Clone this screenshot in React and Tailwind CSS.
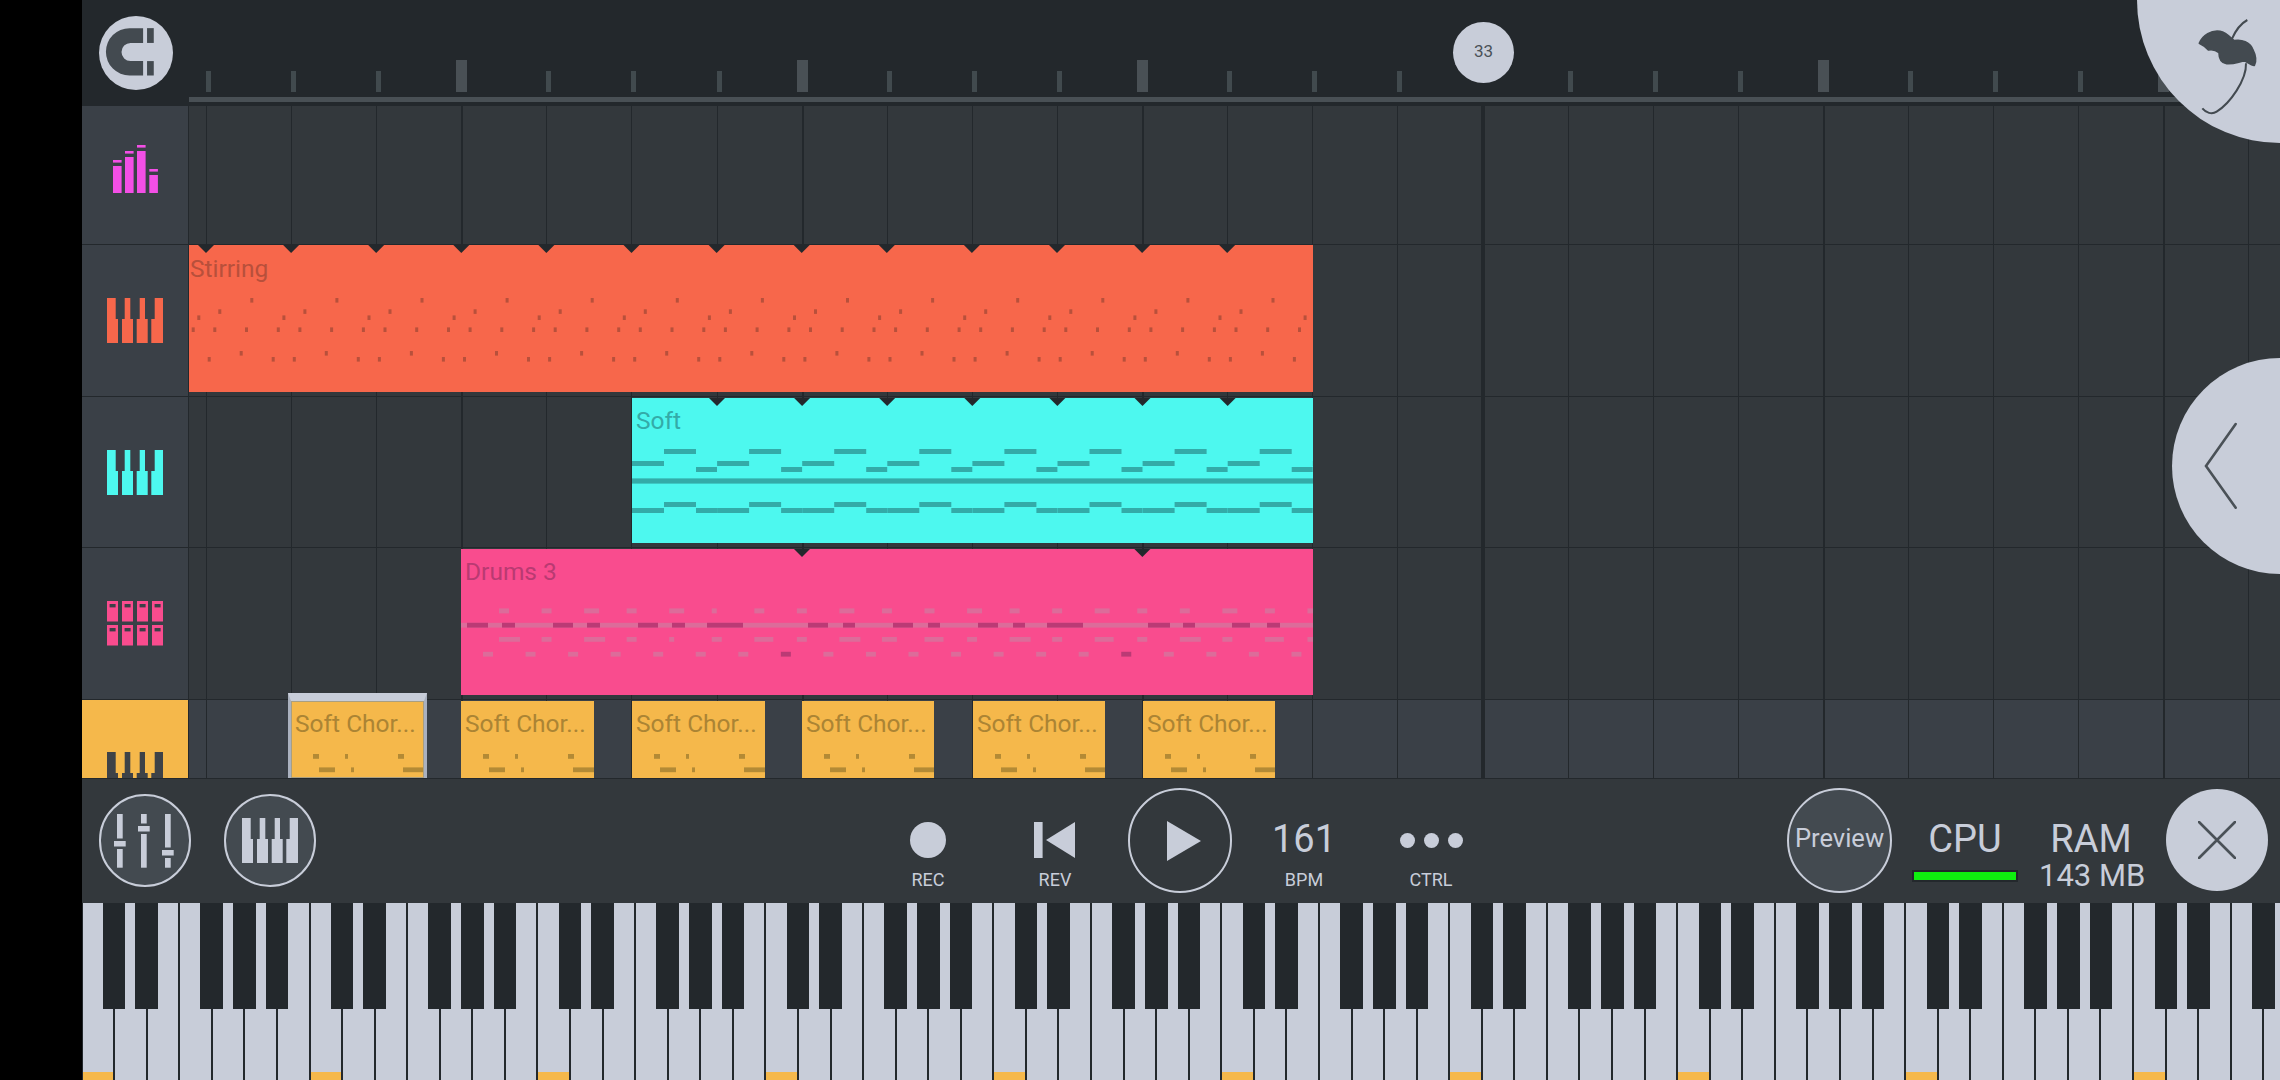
const ICON_KEYS = "M0 0H8.7V21H11V45H0Z M17.7 0H23.3V21H26V45H15V21H17.7Z M32.7 0H38V21H40.7V45H29.7V21H32.7Z M47.7 0H56V45H44.3V21H47.7Z"

function KeysIcon({ className }) {
  return (
    <svg viewBox="0 0 56 45" className={className} fill="currentColor">
      <path d={ICON_KEYS} />
    </svg>
  )
}

function EqIcon() {
  const bars = [
    [0, 21, 15],
    [12, 12, 6],
    [24, 6, 0],
    [36.3, 30, 24],
  ]
  return (
    <svg viewBox="0 0 45 48" className="w-[45px] h-[48px]" fill="#f34fe6">
      {bars.map(([x, top, cap]) => (
        <g key={x}>
          <rect x={x} y={top} width="8.6" height={48 - top} />
          <rect x={x} y={cap} width="8.6" height="2.6" />
        </g>
      ))}
    </svg>
  )
}

function DrumIcon() {
  const xs = [0, 15, 30, 45]
  const ys = [0, 24]
  return (
    <svg viewBox="0 0 56 45" className="w-[56px] h-[45px]">
      {ys.map((y) =>
        xs.map((x) => (
          <g key={`${x}-${y}`}>
            <rect x={x} y={y} width="11" height="20.5" fill="#f94c8e" />
            <rect x={x + 2.6} y={y + 3} width="6" height="3.4" fill="#3a4047" />
          </g>
        ))
      )}
    </svg>
  )
}

function MixerIcon() {
  const sliders = [
    [117, 840],
    [141, 825],
    [165, 849],
  ]
  return (
    <svg viewBox="110 810 70 60" className="w-[70px] h-[60px]" fill="#c8cdd9">
      {sliders.map(([x, knob]) => (
        <g key={x}>
          <rect x={x} y="813" width="5.7" height={knob - 2.5 - 813} />
          <rect x={x - 3} y={knob} width="11.7" height="5.5" />
          <rect x={x} y={knob + 8} width="5.7" height={866.7 - knob - 8} />
        </g>
      ))}
    </svg>
  )
}

function Magnet() {
  return (
    <svg viewBox="98 16 75 75" className="w-[74px] h-[74px]" fill="#434a50">
      <path d="M142.7 28.3H129A24 24 0 0 0 129 76.3H142.7V61.7H130A9.2 9.2 0 0 1 130 43.3H142.7Z" />
      <rect x="146.7" y="28.3" width="6.8" height="15" />
      <rect x="146.7" y="61.7" width="6.8" height="14.6" />
    </svg>
  )
}

function Stirring() {
  const base = [
    [250.3, 298],
    [218.3, 309.3],
    [197.3, 315.4],
    [191.7, 327.4],
    [213.3, 327.4],
    [245, 327.4],
    [239.7, 351],
    [207.7, 357],
    [271.7, 357],
  ]
  const notes = []
  for (let p = 0; p < 14; p++) {
    base.forEach(([x, y]) => notes.push([x + p * 85.1, y]))
  }
  return (
    <svg viewBox="189 245 1124 147" className="absolute inset-0 w-full h-full" fill="#b8503b">
      {notes.map(([x, y]) => (
        <rect key={`${x}-${y}`} x={x} y={y} width="3" height="4.6" />
      ))}
    </svg>
  )
}

function SoftNotes() {
  const base = [
    [664, 449, 32],
    [632, 461, 32],
    [696, 467, 21],
    [664, 502, 32],
    [632, 508, 32],
    [696, 508, 21],
  ]
  const notes = []
  for (let p = 0; p < 9; p++) {
    base.forEach(([x, y, w]) => notes.push([x + p * 85.1, y, w]))
  }
  return (
    <svg viewBox="632 398 681 145" className="absolute inset-0 w-full h-full" fill="#33aba8">
      {notes.map(([x, y, w]) => (
        <rect key={`${x}-${y}`} x={x} y={y} width={w} height="5" />
      ))}
      <rect x="632" y="478.4" width="681" height="5.2" />
    </svg>
  )
}

function DrumNotes() {
  const row1 = [10, 10, 15, 10, 15, 5, 10, 10, 15, 10, 10, 15, 10, 10, 15, 10, 10, 15, 10, 10]
  const row3 = [21, 10, 21, 10, 5, 10, 19, 10, 21, 15, 19, 10, 21, 10, 19, 10, 21, 10, 19, 10]
  const dark = [
    [467, 488], [502, 515], [553, 573], [587, 600], [638, 658], [672, 685],
    [707, 743], [808, 828], [843, 855], [893, 913], [928, 940], [978, 998],
    [1013, 1025], [1047, 1083], [1148, 1170], [1183, 1195], [1232, 1250], [1267, 1280],
  ]
  return (
    <svg viewBox="461 549 852 146" className="absolute inset-0 w-full h-full">
      {row1.map((w, i) => (
        <rect key={i} x={499 + i * 42.55} y="608.4" width={w} height="5" fill="#dc6c9a" />
      ))}
      <rect x="461" y="622.8" width="852" height="4.8" fill="#dc6c9a" />
      {dark.map(([a, b]) => (
        <rect key={a} x={a} y="622.8" width={b - a} height="4.8" fill="#bb3a75" />
      ))}
      {row3.map((w, i) => (
        <rect key={i} x={499 + i * 42.55} y="637" width={w} height="4.8" fill="#dc6c9a" />
      ))}
      {Array.from({ length: 20 }, (_, i) => (
        <rect
          key={i}
          x={483 + i * 42.55}
          y="651.8"
          width="10"
          height="4.8"
          fill={i === 7 || i === 15 ? "#bb3a75" : "#dc6c9a"}
        />
      ))}
    </svg>
  )
}

function ChordNotes() {
  const notes = [
    [22, 53, 6],
    [54, 53, 3],
    [107, 53, 6],
    [28, 66.4, 16],
    [60, 66.4, 3],
    [112, 66.4, 21],
  ]
  return (
    <svg viewBox="0 0 133 77" className="absolute left-0 top-0 w-[133px] h-[77px]" fill="#b38a35">
      {notes.map(([x, y, w]) => (
        <rect key={x} x={x} y={y} width={w} height="4.8" />
      ))}
    </svg>
  )
}

// little dark notches that sit on the top edge of a clip
function Notches({ from, count, left, step = 85.1 }) {
  return (
    <svg viewBox="0 0 1130 8" className="absolute top-0 left-0 w-[1130px] h-2 overflow-visible" fill="#23282c">
      {Array.from({ length: count }, (_, i) => {
        const x = from + i * step - left
        return <polygon key={i} points={`${x - 8},0 ${x + 8},0 ${x},8`} />
      })}
    </svg>
  )
}

function GridColumns() {
  const cols = Array.from({ length: 25 }, (_, i) => i)
  return (
    <div className="absolute inset-0 flex overflow-hidden">
      <div className="w-[17px] shrink-0" />
      {cols.map((i) => (
        <div
          key={i}
          className={
            i === 15
              ? "w-[85.1px] shrink-0 -ml-[1.5px] mr-[1.5px] border-l-4 border-[#23282c]"
              : i % 4 === 3
                ? "w-[85.1px] shrink-0 border-l-2 border-[#23282c]"
                : "w-[85.1px] shrink-0 border-l border-[#23282c]"
          }
        />
      ))}
    </div>
  )
}

function Track({ height, bg = "bg-[#33383c]", side = "bg-[#3a4047]", sideClass = "items-center justify-center", icon, children }) {
  return (
    <div className={`flex shrink-0 border-b border-[#23282c] ${height}`}>
      <div className={`w-[107px] shrink-0 flex overflow-hidden border-r border-[#23282c] ${side} ${sideClass}`}>{icon}</div>
      <div className={`relative flex-1 ${bg}`}>
        <GridColumns />
        {children}
      </div>
    </div>
  )
}

function ChordClip({ left, width = "w-[133px]", selected }) {
  return (
    <div className={`absolute top-[1px] bottom-0 overflow-hidden bg-[#f5b84b] ${left} ${width}`}>
      <ChordNotes />
      {selected && <div className="absolute inset-0 border border-[#aa9f80]" />}
      <div className="relative pl-1 pt-[9px] text-[24.5px] leading-7 whitespace-nowrap text-[#ab8434]">
        Soft Chor...
      </div>
    </div>
  )
}

function Ruler() {
  const ticks = Array.from({ length: 25 }, (_, i) => i)
  return (
    <div className="flex-1 flex flex-col min-w-0">
      <div className="h-[92px] flex items-end pl-[17px] overflow-hidden">
        {ticks.map((i) => (
          <div key={i} className="w-[85.1px] shrink-0">
            {i === 15 ? null : i % 4 === 3 ? (
              <div className="w-[11px] h-8 -ml-[5px] bg-[#495055]" />
            ) : (
              <div className="w-[5px] h-[21px] bg-[#414a4e]" />
            )}
          </div>
        ))}
      </div>
      <div className="mt-[5px] h-[5px] bg-[#495055]" />
    </div>
  )
}

function TransportLabel({ children }) {
  return <div className="mt-[11px] text-lg leading-[22px] text-center text-[#c8cdd9]">{children}</div>
}

function Transport() {
  return (
    <div className="h-[124px] shrink-0 flex items-start bg-[#33383c] text-[#c8cdd9]">
      <button className="ml-[17px] mt-[15px] w-[92px] h-[93px] shrink-0 rounded-full border-2 border-[#c8cdd9] bg-[#434a50] flex items-center justify-center">
        <MixerIcon />
      </button>
      <button className="ml-[33px] mt-[15px] w-[92px] h-[93px] shrink-0 rounded-full border-2 border-[#c8cdd9] bg-[#434a50] flex items-center justify-center">
        <KeysIcon className="w-[56px] h-[45px] text-[#c8cdd9]" />
      </button>

      <div className="ml-[562px] mt-[43px] w-[100px] shrink-0">
        <div className="h-9 flex justify-center">
          <div className="w-9 h-9 rounded-full bg-[#c8cdd9]" />
        </div>
        <TransportLabel>REC</TransportLabel>
      </div>
      <div className="ml-[27px] mt-[43px] w-[100px] shrink-0">
        <div className="h-9 flex justify-center">
          <svg viewBox="0 0 42 36" className="w-[42px] h-9" fill="#c8cdd9">
            <rect x="0" y="0" width="8.6" height="36" />
            <polygon points="12,18 41,0 41,36" />
          </svg>
        </div>
        <TransportLabel>REV</TransportLabel>
      </div>
      <button className="ml-[23px] mt-[9px] w-[104px] h-[105px] shrink-0 rounded-full border-2 border-[#c8cdd9] flex items-center justify-center">
        <svg viewBox="0 0 34 40" className="ml-[7px] w-[34px] h-10" fill="#c8cdd9">
          <polygon points="0,0 34,20 0,40" />
        </svg>
      </button>
      <div className="ml-[22px] mt-[43px] w-[100px] shrink-0">
        <div className="h-9 text-[38px] leading-[34px] text-center">161</div>
        <TransportLabel>BPM</TransportLabel>
      </div>
      <div className="ml-[27px] mt-[43px] w-[100px] shrink-0">
        <div className="h-9 flex items-center justify-center gap-[9px]">
          <div className="w-[15px] h-[15px] rounded-full bg-[#c8cdd9]" />
          <div className="w-[15px] h-[15px] rounded-full bg-[#c8cdd9]" />
          <div className="w-[15px] h-[15px] rounded-full bg-[#c8cdd9]" />
        </div>
        <TransportLabel>CTRL</TransportLabel>
      </div>

      <button className="ml-auto mt-[9px] w-[105px] h-[105px] shrink-0 rounded-full border-2 border-[#c8cdd9] bg-[#434a50] text-[25.5px] leading-none text-center text-[#c8cdd9] flex items-center justify-center pb-1">
        Preview
      </button>
      <div className="ml-[20px] mt-[43px] w-[106px] shrink-0">
        <div className="h-9 text-[38px] leading-[34px] text-center">CPU</div>
        <div className="mt-[12px] h-3 border-2 border-[#23282c] bg-[#0fef0f]" />
      </div>
      <div className="ml-[21px] mt-[43px] w-[104px] shrink-0">
        <div className="h-9 text-[38px] leading-[34px] text-center">RAM</div>
        <div className="mt-[2px] text-[31px] leading-[32px] text-center whitespace-nowrap">143 MB</div>
      </div>
      <button className="ml-[23px] mr-[12px] mt-[10px] w-[102px] h-[102px] shrink-0 rounded-full bg-[#c8cdd9] flex items-center justify-center">
        <svg viewBox="0 0 38 38" className="w-[38px] h-[38px]" stroke="#4a5157" strokeWidth="2.6" strokeLinecap="round" fill="none">
          <path d="M1 1L37 37M37 1L1 37" />
        </svg>
      </button>
    </div>
  )
}

function Keyboard() {
  const whites = Array.from({ length: 69 }, (_, i) => i)
  const blackOffsets = [
    [20.4, 22],
    [52.4, 23],
    [117.4, 23],
    [150.4, 23],
    [183.4, 22],
  ]
  const octaves = Array.from({ length: 10 }, (_, i) => i)
  return (
    <div className="relative flex-1 flex pl-[0.6px] overflow-hidden bg-[#23282c]">
      {whites.map((i) => (
        <div key={i} className="w-[32.57px] h-full shrink-0 flex flex-col justify-end border-r-2 border-[#23282c] bg-[#c8cdd9]">
          {i % 7 === 0 && <div className="h-2 bg-[#f5b84b]" />}
        </div>
      ))}
      {octaves.map((o) =>
        blackOffsets.map(([x, w]) => (
          <div
            key={`${o}-${x}`}
            className="absolute top-0 h-[106px] bg-[#23282c]"
            style={{ left: 0.6 + o * 228 + x, width: w }}
          />
        ))
      )}
    </div>
  )
}

export default function App() {
  return (
    <div className="relative flex h-screen w-screen overflow-hidden bg-black font-[Roboto,sans-serif]">
      <div className="w-[82px] shrink-0 bg-black" />
      <div className="flex-1 min-w-0 flex flex-col">
        <div className="h-[106px] shrink-0 flex bg-[#23282c]">
          <div className="w-[107px] shrink-0 flex items-center justify-center">
            <div className="w-[74px] h-[74px] rounded-full bg-[#c8cdd9]">
              <Magnet />
            </div>
          </div>
          <Ruler />
        </div>

        <Track height="h-[139px]" sideClass="items-center justify-center pb-[13px]" icon={<EqIcon />} />

        <Track height="h-[152px]" icon={<KeysIcon className="w-[56px] h-[45px] text-[#f7674b]" />}>
          <div className="absolute left-0 top-0 w-[1124px] h-[147px] overflow-hidden bg-[#f7674b]">
            <Stirring />
            <Notches from={206} count={13} left={189} />
            <div className="relative pl-[1px] pt-[10px] text-[24.5px] leading-7 text-[#b8503b]">Stirring</div>
          </div>
        </Track>

        <Track height="h-[151px]" icon={<KeysIcon className="w-[56px] h-[45px] text-[#4df8ef]" />}>
          <div className="absolute left-[443px] top-[1px] w-[681px] h-[145px] overflow-hidden bg-[#4df8ef]">
            <SoftNotes />
            <Notches from={717} count={7} left={632} />
            <div className="relative pl-[4px] pt-[9px] text-[24.5px] leading-7 text-[#33aba8]">Soft</div>
          </div>
        </Track>

        <Track height="h-[152px]" icon={<DrumIcon />}>
          <div className="absolute left-[272px] top-[1px] w-[852px] h-[146px] overflow-hidden bg-[#f94c8e]">
            <DrumNotes />
            <Notches from={802} count={2} step={340.4} left={461} />
            <div className="relative pl-[4px] pt-[9px] text-[24.5px] leading-7 text-[#b93a72]">Drums 3</div>
          </div>
        </Track>

        <Track
          height="h-[79px]"
          bg="bg-[#3a4047]"
          side="bg-[#f5b84b]"
          sideClass="items-start justify-center pt-[52px]"
          icon={<KeysIcon className="w-[56px] h-[45px] shrink-0 text-[#3e4247]" />}
        >
          <div className="absolute left-[99px] -top-[7px] bottom-0 w-[139px] border-x-[3px] border-t-[8px] border-x-[#aab1bf] border-t-[#c8cdd9]" />
          <ChordClip left="left-[102px]" selected />
          <ChordClip left="left-[272px]" />
          <ChordClip left="left-[443px]" />
          <ChordClip left="left-[613px]" width="w-[132px]" />
          <ChordClip left="left-[784px]" width="w-[132px]" />
          <ChordClip left="left-[954px]" width="w-[132px]" />
        </Track>

        <Transport />
        <Keyboard />
      </div>

      {/* playhead */}
      <div className="absolute left-[1453px] top-[22px] w-[61px] h-[61px] rounded-full bg-[#c8cdd9] flex items-center justify-center pb-[2px] text-[17px] text-[#4a5157]">
        33
      </div>

      {/* corner logo */}
      <div className="absolute right-0 top-0 w-[143px] h-[143px] rounded-bl-full bg-[#c8cdd9]" />
      <svg viewBox="0 0 600 480" className="absolute right-0 top-0 w-[200px] h-[160px]">
        <path
          d="M358 130C368 105 395 90 420 94C440 98 452 114 462 122C485 117 510 127 518 147C528 167 530 183 523 196C515 198 505 188 495 183C480 183 465 193 440 191C422 188 417 175 417 158C405 148 395 148 385 150L372 138Z"
          fill="#434a50"
          stroke="#434a50"
          strokeWidth="5"
          strokeLinejoin="round"
        />
        <path
          d="M455 118C465 95 480 72 502 60M498 190C500 240 450 310 410 335C395 345 378 338 367 325"
          stroke="#434a50"
          strokeWidth="6"
          fill="none"
        />
      </svg>

      {/* side drawer handle */}
      <div className="absolute right-0 top-[358px] w-[108px] h-[216px] rounded-l-full bg-[#c8cdd9]">
        <svg viewBox="0 0 108 216" className="w-[108px] h-[216px]" fill="none" stroke="#4a5157" strokeWidth="2.6" strokeLinecap="round">
          <path d="M63.7 66L34 108L63.7 149.7" />
        </svg>
      </div>
    </div>
  )
}
